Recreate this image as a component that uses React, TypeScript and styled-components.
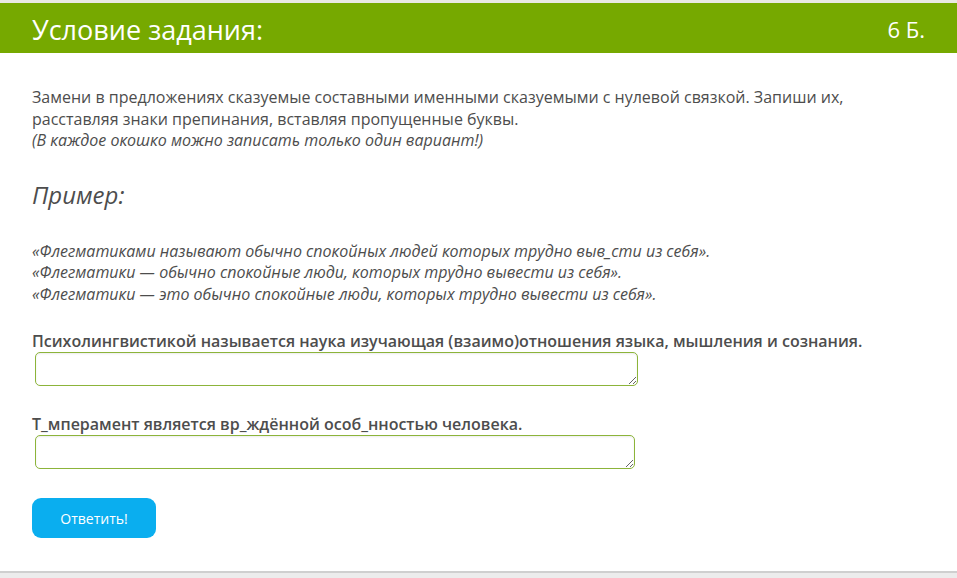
import React from 'react';
import styled, { createGlobalStyle } from 'styled-components';

const GlobalStyle = createGlobalStyle`
  html, body {
    margin: 0;
    padding: 0;
    background: #fff;
  }
  body {
    font-family: "Open Sans", "Liberation Sans", sans-serif;
    color: #4d4d4d;
  }
`;

const Page = styled.div`
  display: flex;
  flex-direction: column;
  min-height: 100vh;
  border-top: 3px solid #e9e9e3;
  box-sizing: border-box;
`;

const Header = styled.div`
  height: 50px;
  background: #76a900;
  color: #fff;
  display: flex;
  align-items: center;
  justify-content: space-between;
  padding: 0 32px 0 32px;
`;

const HeaderTitle = styled.h1`
  margin: 0;
  font-size: 27px;
  font-weight: 400;
  line-height: 1;
  padding-top: 2px;
`;

const Points = styled.span`
  font-size: 22px;
  padding-top: 2px;
`;

const Body = styled.div`
  flex: 1;
  padding: 34px 32px 0;
`;

const Text = styled.p`
  margin: 0;
  font-size: 16px;
  line-height: 21.5px;
`;

const Note = styled.em`
  display: block;
`;

const ExampleTitle = styled.h2`
  margin: 27px 0 0;
  font-size: 24px;
  font-style: italic;
  font-weight: 400;
  line-height: 32px;
`;

const ExampleText = styled(Text)`
  margin-top: 30px;
  font-style: italic;
`;

const Task = styled.div`
  margin-top: 26px;
  & + & {
    margin-top: 28px;
  }
`;

const Label = styled.div`
  font-size: 16px;
  font-weight: 600;
  line-height: 20px;
`;

const Field = styled.textarea<{ $w: number }>`
  display: block;
  box-sizing: border-box;
  margin: 1px 0 0 3px;
  width: ${(p) => p.$w}px;
  height: 34px;
  border: 1px solid #8cb43a;
  border-radius: 5px;
  box-shadow: inset 0 1px 2px rgba(0, 0, 0, 0.08);
  font-family: inherit;
  font-size: 14px;
  outline: none;
  resize: both;
`;

const Button = styled.button`
  display: block;
  margin-top: 29px;
  width: 124px;
  height: 40px;
  border: none;
  border-radius: 9px;
  background: #0aaeef;
  color: #fff;
  font-family: "Open Sans", "Liberation Sans", sans-serif;
  font-size: 14px;
  cursor: pointer;
`;

const Footer = styled.div`
  height: 5px;
  border-top: 2px solid #cfcfcf;
  background: #ececec;
`;

export default function App() {
  return (
    <>
      <GlobalStyle />
      <Page>
        <Header>
          <HeaderTitle>Условие задания:</HeaderTitle>
          <Points>6 Б.</Points>
        </Header>
        <Body>
          <Text>
            Замени в предложениях сказуемые составными именными сказуемыми с нулевой связкой. Запиши их,
            <br />
            расставляя знаки препинания, вставляя пропущенные буквы.
            <Note>(В каждое окошко можно записать только один вариант!)</Note>
          </Text>
          <ExampleTitle>Пример:</ExampleTitle>
          <ExampleText>
            «Флегматиками называют обычно спокойных людей которых трудно выв_сти из себя».
            <br />
            «Флегматики — обычно спокойные люди, которых трудно вывести из себя».
            <br />
            «Флегматики — это обычно спокойные люди, которых трудно вывести из себя».
          </ExampleText>
          <Task>
            <Label>Психолингвистикой называется наука изучающая (взаимо)отношения языка, мышления и сознания.</Label>
            <Field $w={603} />
          </Task>
          <Task>
            <Label>Т_мперамент является вр_ждённой особ_нностью человека.</Label>
            <Field $w={600} />
          </Task>
          <Button>Ответить!</Button>
        </Body>
        <Footer />
      </Page>
    </>
  );
}
